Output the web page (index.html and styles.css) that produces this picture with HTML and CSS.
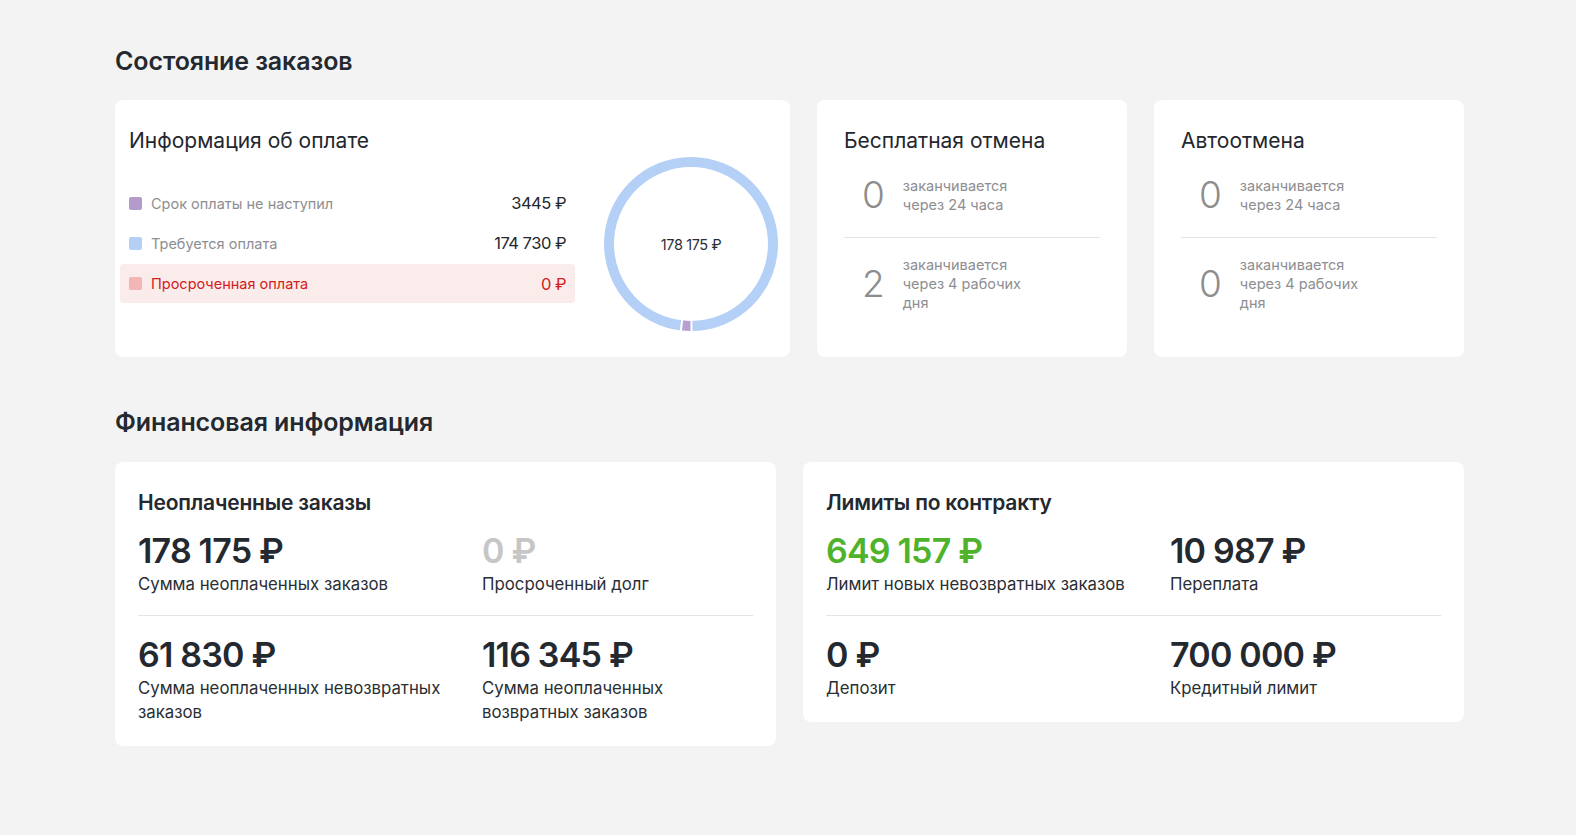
FILE: index.html
```html
<!DOCTYPE html>
<html lang="ru">
<head>
<meta charset="utf-8">
<title>Состояние заказов</title>
<link rel="stylesheet" href="styles.css">
</head>
<body>
<main class="page">
  <h2 class="section-title">Состояние заказов</h2>
  <div class="status-row">
    <section class="card pay-card">
      <div class="pay-left">
        <h3 class="card-title">Информация об оплате</h3>
        <ul class="legend">
          <li class="legend-row"><span class="swatch swatch-purple"></span><span class="legend-label">Срок оплаты не наступил</span><span class="legend-value">3445 ₽</span></li>
          <li class="legend-row"><span class="swatch swatch-blue"></span><span class="legend-label">Требуется оплата</span><span class="legend-value">174 730 ₽</span></li>
          <li class="legend-row legend-row-alert"><span class="swatch swatch-red"></span><span class="legend-label">Просроченная оплата</span><span class="legend-value">0 ₽</span></li>
        </ul>
      </div>
      <div class="donut">
        <svg class="donut-svg" viewBox="0 0 174 174" width="174" height="174">
          <circle cx="87" cy="87" r="82" fill="none" stroke="#b4d0f6" stroke-width="10"/>
          <circle cx="87" cy="87" r="82" fill="none" stroke="#ffffff" stroke-width="11" stroke-dasharray="12 600" transform="rotate(89 87 87)"/>
          <circle cx="87" cy="87" r="82" fill="none" stroke="#b6a0cf" stroke-width="10" stroke-dasharray="0 2 8 600" transform="rotate(89 87 87)"/>
        </svg>
        <span class="donut-total">178 175 ₽</span>
      </div>
    </section>

    <section class="card cancel-card">
      <h3 class="card-title">Бесплатная отмена</h3>
      <div class="cancel-row">
        <span class="cancel-num">0</span>
        <span class="cancel-text">заканчивается через 24 часа</span>
      </div>
      <div class="cancel-row cancel-row-second">
        <span class="cancel-num">2</span>
        <span class="cancel-text">заканчивается через 4 рабочих дня</span>
      </div>
    </section>

    <section class="card cancel-card">
      <h3 class="card-title">Автоотмена</h3>
      <div class="cancel-row">
        <span class="cancel-num">0</span>
        <span class="cancel-text">заканчивается через 24 часа</span>
      </div>
      <div class="cancel-row cancel-row-second">
        <span class="cancel-num">0</span>
        <span class="cancel-text">заканчивается через 4 рабочих дня</span>
      </div>
    </section>
  </div>

  <h2 class="section-title section-title-second">Финансовая информация</h2>
  <div class="finance-row">
    <section class="card fin-card">
      <h3 class="fin-title">Неоплаченные заказы</h3>
      <div class="fin-grid">
        <div class="fin-item"><div class="fin-value">178 175 ₽</div><div class="fin-label">Сумма неоплаченных заказов</div></div>
        <div class="fin-item"><div class="fin-value fin-value-muted">0 ₽</div><div class="fin-label">Просроченный долг</div></div>
      </div>
      <div class="fin-grid fin-grid-second">
        <div class="fin-item"><div class="fin-value">61 830 ₽</div><div class="fin-label">Сумма неоплаченных невозвратных заказов</div></div>
        <div class="fin-item"><div class="fin-value">116 345 ₽</div><div class="fin-label">Сумма неоплаченных возвратных заказов</div></div>
      </div>
    </section>

    <section class="card fin-card">
      <h3 class="fin-title">Лимиты по контракту</h3>
      <div class="fin-grid">
        <div class="fin-item"><div class="fin-value fin-value-green">649 157 ₽</div><div class="fin-label">Лимит новых невозвратных заказов</div></div>
        <div class="fin-item"><div class="fin-value">10 987 ₽</div><div class="fin-label">Переплата</div></div>
      </div>
      <div class="fin-grid fin-grid-second">
        <div class="fin-item"><div class="fin-value">0 ₽</div><div class="fin-label">Депозит</div></div>
        <div class="fin-item"><div class="fin-value">700 000 ₽</div><div class="fin-label">Кредитный лимит</div></div>
      </div>
    </section>
  </div>
</main>
</body>
</html>
```

FILE: styles.css
```css
* { box-sizing: border-box; }

html, body {
  margin: 0;
  padding: 0;
  background: #f3f3f3;
}

body {
  font-family: Inter, "Noto Sans", sans-serif;
  color: #262a31;
  min-height: 835px;
}

.page {
  width: 1349px;
  margin-left: 115px;
  padding-top: 45px;
}

.section-title {
  margin: 0 0 23px;
  font-size: 25px;
  line-height: 32px;
  font-weight: 600;
  color: #24282f;
  letter-spacing: -0.1px;
}

.section-title-second {
  margin-top: 49px;
  margin-bottom: 24px;
}

.status-row {
  display: flex;
  gap: 27px;
  align-items: stretch;
}

.card {
  background: #ffffff;
  border-radius: 8px;
}

.card-title {
  margin: 0;
  font-size: 21px;
  line-height: 28px;
  font-weight: 400;
  color: #23272e;
  letter-spacing: 0;
}

/* payment card */
.pay-card {
  width: 675px;
  display: flex;
  padding: 27px 12px 26px 14px;
}

.pay-left {
  flex: 1;
  min-width: 0;
}

.legend {
  list-style: none;
  margin: 28px 0 0 -9px;
  padding: 0;
}

.legend-row {
  display: flex;
  align-items: center;
  height: 40px;
  padding: 0 9px;
  border-radius: 4px;
  font-size: 14.5px;
}

.legend-row-alert {
  background: #fbecec;
  margin-top: 1px;
  height: 39px;
}

.swatch {
  width: 13px;
  height: 13px;
  border-radius: 2px;
  margin-right: 9px;
  flex: none;
}

.swatch-purple { background: #b39ccb; }
.swatch-blue { background: #b4d0f6; }
.swatch-red { background: #f3b5b5; }

.legend-label {
  flex: 1;
  color: #8d8e92;
}

.legend-value {
  font-size: 16.5px;
  color: #24282f;
  letter-spacing: -0.5px;
}

.legend-row-alert .legend-label,
.legend-row-alert .legend-value {
  color: #d3201d;
}

.donut {
  position: relative;
  width: 174px;
  height: 174px;
  margin: 30px 0 0 29px;
  flex: none;
}

.donut-svg {
  display: block;
}

.donut-total {
  position: absolute;
  inset: 0;
  display: flex;
  align-items: center;
  justify-content: center;
  font-size: 14.5px;
  color: #2a2e35;
  letter-spacing: -0.4px;
}

/* cancel cards */
.cancel-card {
  width: 310px;
  padding: 27px 27px 0 27px;
}

.cancel-row {
  display: flex;
  align-items: center;
  padding: 21px 0 23px;
}

.cancel-row-second {
  border-top: 1px solid #e4e4e4;
  padding-top: 17px;
}

.cancel-num {
  margin: 0 19px 0 18px;
  font-size: 37px;
  line-height: 38px;
  font-weight: 300;
  color: #8d8d8d;
  letter-spacing: -1px;
}

.cancel-text {
  width: 125px;
  font-size: 14.5px;
  line-height: 19px;
  color: #8d8e92;
}

/* finance */
.finance-row {
  display: flex;
  gap: 27px;
  align-items: flex-start;
}

.fin-card {
  width: 661px;
  padding: 27px 23px 22px 23px;
}

.fin-title {
  margin: 0 0 14px;
  font-size: 21px;
  line-height: 28px;
  font-weight: 600;
  color: #24282f;
  letter-spacing: -0.2px;
}

.fin-grid {
  display: grid;
  grid-template-columns: 322px 1fr;
  column-gap: 22px;
  padding-bottom: 19px;
}

.fin-grid-second {
  border-top: 1px solid #e4e4e4;
  padding-top: 19px;
  padding-bottom: 0;
}

.fin-label {
  font-size: 16.8px;
  line-height: 24px;
  color: #2a2e35;
}

.fin-value {
  font-size: 34px;
  line-height: 40px;
  font-weight: 600;
  color: #24282f;
  letter-spacing: -0.8px;
}

.fin-value + .fin-label {
  margin-top: 1px;
}

.fin-value-muted { color: #c6c6c6; }
.fin-value-green { color: #4fb22b; }
```
